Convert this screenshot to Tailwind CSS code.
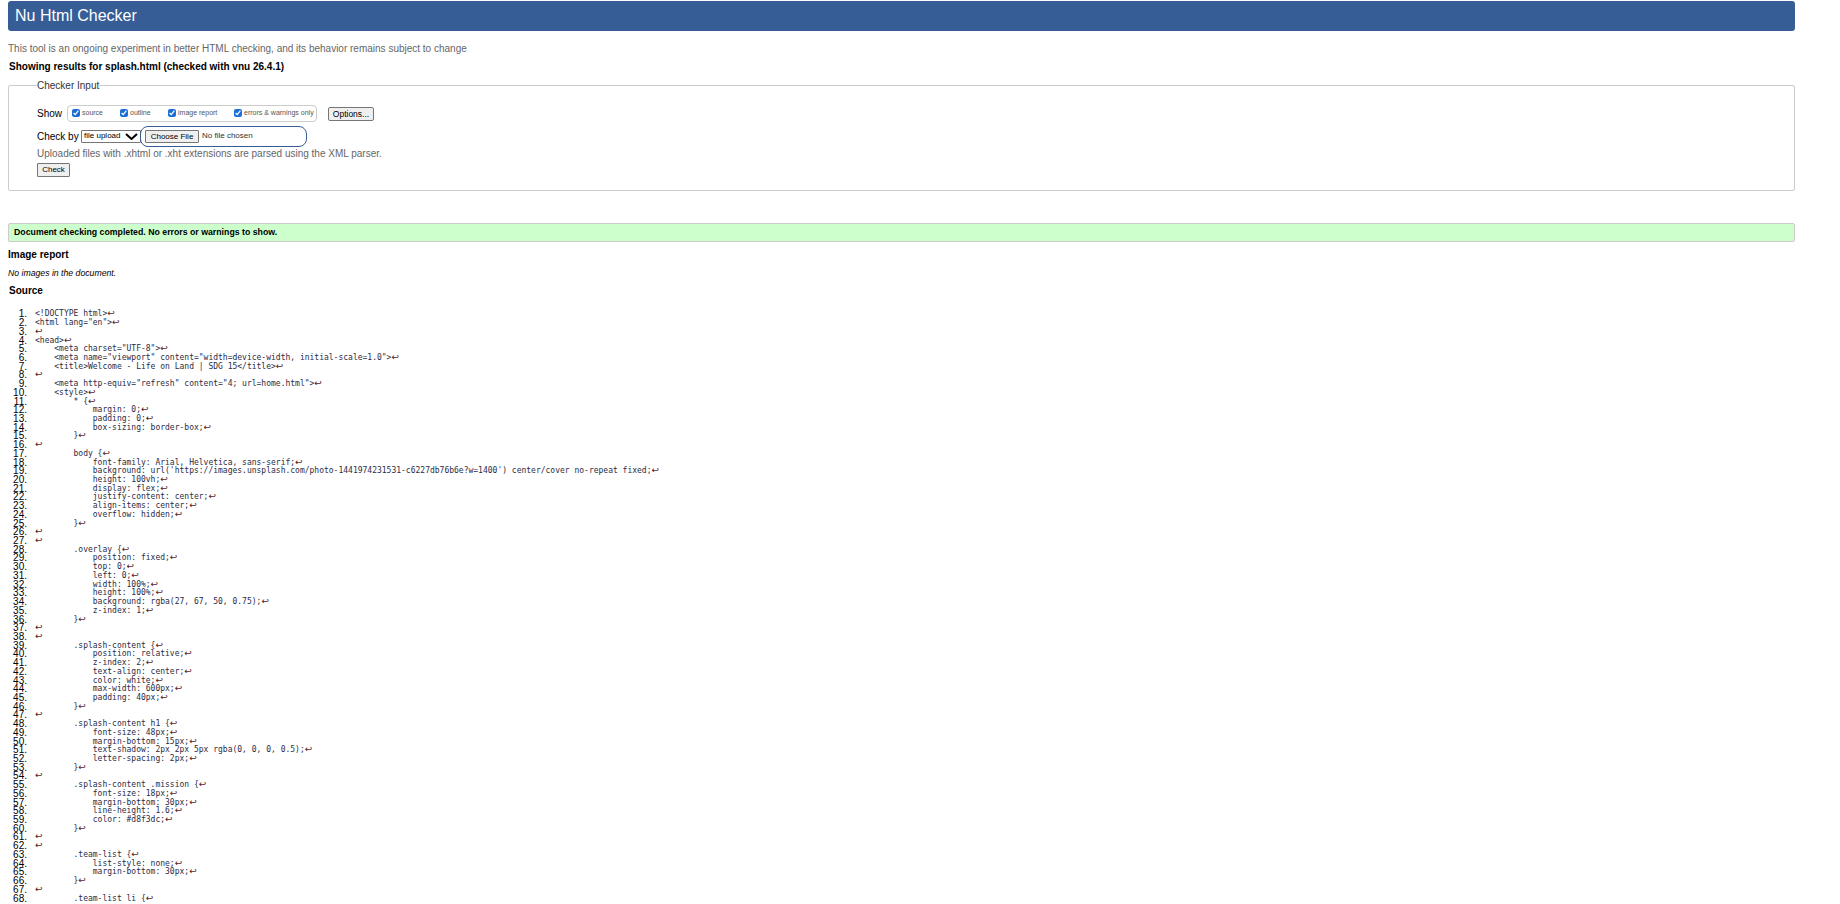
<!DOCTYPE html>
<html lang="en">

<head>
  <meta charset="UTF-8" />
  <meta name="viewport" content="width=device-width, initial-scale=1.0" />
  <title>Nu Html Checker</title>
  <script src="https://cdn.jsdelivr.net/npm/@tailwindcss/browser@4"></script>
</head>

<body class="h-[904px] overflow-hidden bg-white pt-px pr-[45px] pl-2 font-['Liberation_Sans',sans-serif] text-[10px] text-black">
  <header class="flex h-[30px] items-center rounded-[3px] bg-[#365d95] pl-[7px] text-[16px] text-white">
    <h1>Nu Html Checker</h1>
  </header>

  <p class="mt-[12px] h-[12px] leading-[12px] text-[#666]">This tool is an ongoing experiment in better HTML checking, and its behavior remains subject to change</p>
  <p class="mt-[6px] h-[12px] pl-px leading-[12px] font-bold">Showing results for splash.html (checked with vnu 26.4.1)</p>

  <fieldset class="mt-[6px] h-[112px] rounded-[2px] border border-[#ccc] pl-[28px]">
    <legend class="ml-0 h-[12px] leading-[14px] text-[#333]">Checker Input</legend>

    <div class="mt-[14px] flex h-[17px] items-center">
      <span class="w-[30px]">Show</span>
      <div class="flex h-[17px] w-[250px] items-center rounded-[4px] border border-[#ccc] pl-[4px] text-[7px] text-[#555]">
        <label class="flex w-[48px] items-center gap-[2px]"><input type="checkbox" checked class="m-0 mb-[2px] h-[8px] w-[8px] accent-[#1a6fd8]" />source</label>
        <label class="flex w-[48px] items-center gap-[2px]"><input type="checkbox" checked class="m-0 mb-[2px] h-[8px] w-[8px] accent-[#1a6fd8]" />outline</label>
        <label class="flex w-[66px] items-center gap-[2px]"><input type="checkbox" checked class="m-0 mb-[2px] h-[8px] w-[8px] accent-[#1a6fd8]" />image report</label>
        <label class="flex items-center gap-[2px]"><input type="checkbox" checked class="m-0 mb-[2px] h-[8px] w-[8px] accent-[#1a6fd8]" />errors &amp; warnings only</label>
      </div>
      <button class="ml-[11px] h-[14px] w-[46px] rounded-[2px] border border-[#767676] bg-[#efefef] text-[8.5px] leading-[12px]">Options...</button>
    </div>

    <div class="mt-[3px] flex h-[22px] items-center">
      <span class="w-[44px]">Check by</span>
      <div class="flex h-[13px] w-[60px] items-center justify-between rounded-[1px] border border-[#767676] px-[2px] text-[8px] whitespace-nowrap">
        <span>file upload</span>
        <svg class="h-[7px] w-[13px] shrink-0" viewBox="0 0 13 7" fill="none" stroke="#000" stroke-width="2"><path d="M1 1l5.5 5L12 1" /></svg>
      </div>
      <div class="-ml-px flex h-[21px] w-[167px] items-center rounded-[8px] border border-[#365d95] pl-[4px] text-[8px] text-[#333]">
        <button class="h-[13px] w-[54px] rounded-[1px] border border-[#767676] bg-[#efefef] leading-[11px] text-black">Choose File</button>
        <span class="ml-[3px]">No file chosen</span>
      </div>
    </div>

    <p class="h-[13px] leading-[13px] text-[#666]">Uploaded files with .xhtml or .xht extensions are parsed using the XML parser.</p>
    <button class="mt-[3px] block h-[14px] w-[33px] rounded-[1px] border border-[#767676] bg-[#efefef] text-[8px] leading-[12px]">Check</button>
  </fieldset>

  <div class="mt-[32px] flex h-[19px] items-center rounded-[2px] border border-[#ccc] bg-[#ccffcc] pl-[5px] text-[8.75px] font-bold">
    Document checking completed. No errors or warnings to show.
  </div>

  <h2 class="mt-[7px] h-[12px] leading-[12px] font-bold">Image report</h2>
  <p class="mt-[6px] h-[12px] text-[8.7px] leading-[12px] italic">No images in the document.</p>
  <h2 class="mt-[6px] h-[12px] pl-px leading-[12px] font-bold">Source</h2>

  <ol id="source" class="mt-[12.5px]"></ol>

  <script>
    const source = `<!DOCTYPE html>
<html lang="en">

<head>
    <meta charset="UTF-8">
    <meta name="viewport" content="width=device-width, initial-scale=1.0">
    <title>Welcome - Life on Land | SDG 15</title>

    <meta http-equiv="refresh" content="4; url=home.html">
    <style>
        * {
            margin: 0;
            padding: 0;
            box-sizing: border-box;
        }

        body {
            font-family: Arial, Helvetica, sans-serif;
            background: url('https://images.unsplash.com/photo-1441974231531-c6227db76b6e?w=1400') center/cover no-repeat fixed;
            height: 100vh;
            display: flex;
            justify-content: center;
            align-items: center;
            overflow: hidden;
        }


        .overlay {
            position: fixed;
            top: 0;
            left: 0;
            width: 100%;
            height: 100%;
            background: rgba(27, 67, 50, 0.75);
            z-index: 1;
        }


        .splash-content {
            position: relative;
            z-index: 2;
            text-align: center;
            color: white;
            max-width: 600px;
            padding: 40px;
        }

        .splash-content h1 {
            font-size: 48px;
            margin-bottom: 15px;
            text-shadow: 2px 2px 5px rgba(0, 0, 0, 0.5);
            letter-spacing: 2px;
        }

        .splash-content .mission {
            font-size: 18px;
            margin-bottom: 30px;
            line-height: 1.6;
            color: #d8f3dc;
        }


        .team-list {
            list-style: none;
            margin-bottom: 30px;
        }

        .team-list li {`.split("\n");

    const list = document.getElementById("source");
    source.forEach((text, i) => {
      const row = document.createElement("li");
      row.className = "flex h-[8.73px] items-center";
      row.innerHTML = `
        <span class="w-[19px] shrink-0 text-right text-[10px] leading-[9px]">${i + 1}.</span>
        <code class="ml-[8px] font-['DejaVu_Sans_Mono',monospace] text-[8px] leading-[9px] whitespace-pre text-[#2b2b45]"></code>`;
      const code = row.querySelector("code");
      code.textContent = text;
      const arrow = document.createElement("span");
      arrow.className = "font-['DejaVu_Sans',sans-serif] text-[9px] text-[#5a1a1a]";
      arrow.textContent = "↩";
      code.appendChild(arrow);
      list.appendChild(row);
    });
  </script>
</body>

</html>
